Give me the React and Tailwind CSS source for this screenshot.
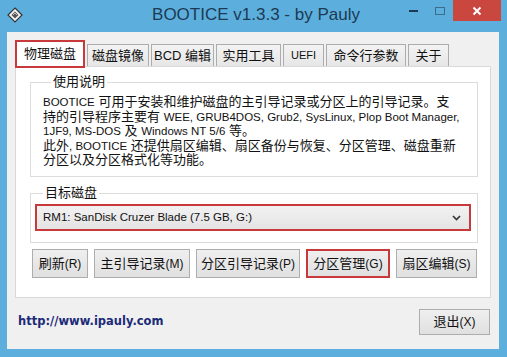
import React from 'react'

const tabs = [
  { label: "物理磁盘", w: "w-[70px]", active: true },
  { label: "磁盘镜像", w: "w-[62px]" },
  { label: "BCD 编辑", w: "w-[63px]" },
  { label: "实用工具", w: "w-[65px]" },
  { label: "UEFI", w: "w-[41px]", small: true },
  { label: "命令行参数", w: "w-[80px]" },
  { label: "关于", w: "w-[41px]" },
];

const buttons = [
  { label: "刷新", key: "(R)", w: "w-[56px]" },
  { label: "主引导记录", key: "(M)", w: "w-[96px]" },
  { label: "分区引导记录", key: "(P)", w: "w-[104px]" },
  { label: "分区管理", key: "(G)", w: "w-[84px]", marked: true },
  { label: "扇区编辑", key: "(S)", w: "w-[81px]" },
];

const font = "font-['Liberation_Sans','Noto_Sans_CJK_SC',sans-serif]";

// latin runs are a bit smaller than the CJK text
const L = ({ children }) => <span className="text-[11.5px]">{children}</span>;

const AppIcon = () => (
  <svg width="16" height="16" viewBox="0 0 16 16">
    <path d="M8 1 L15 8 L8 15 L1 8 Z" fill="#f4f4f4" stroke="#333" strokeWidth="1.2" />
    <path d="M4.5 8 L8 4.5 L11.5 8 L8 11.5 Z" fill="#555" />
    <path d="M6 8 L8 6 L10 8" fill="none" stroke="#ddd" strokeWidth="0.8" />
  </svg>
);

const App = () => {
  return (
    <div lang="zh-CN" className={`w-[507px] h-[357px] bg-[#5cafdc] flex flex-col ${font} overflow-hidden`}>
      {/* title bar */}
      <div className="h-[32px] flex items-start relative">
        <div className="pl-[7px] pt-[7px]">
          <AppIcon />
        </div>
        <div className="flex-1 text-center text-[17px] leading-[30px] text-[#1d3a55] pl-[90px]">
          BOOTICE v1.3.3 - by Pauly
        </div>
        <div className="flex items-start">
          <div className="w-[28px] h-[21px] flex items-center justify-center">
            <div className="w-[9px] h-[2px] bg-[#1d3a55]" />
          </div>
          <div className="w-[26px] h-[21px] flex items-center justify-center">
            <div className="w-[10px] h-[8px] border border-[#3d6b8c]" />
          </div>
          <div className="w-[48px] h-[21px] bg-[#c9473f] flex items-center justify-center mr-[6px]">
            <svg width="10" height="10" viewBox="0 0 10 10">
              <path d="M1.5 1.5 L8.5 8.5 M8.5 1.5 L1.5 8.5" stroke="#fff" strokeWidth="2" />
            </svg>
          </div>
        </div>
      </div>

      {/* client area */}
      <div className="ml-[7px] w-[492px] h-[317px] bg-[#f0f0f0] pl-[8px] pt-[8px] text-[13px] text-[#111]">
        <div className="flex items-end gap-[2px] h-[26px]">
          {tabs.map((t) =>
            t.active ? (
              <div
                key={t.label}
                className={`${t.w} h-[28px] -mb-[2px] relative z-10 bg-white border-2 border-[#c8393b] flex items-center justify-center`}
              >
                {t.label}
              </div>
            ) : (
              <div
                key={t.label}
                className={`${t.w} h-[22px] bg-gradient-to-b from-[#f3f3f3] to-[#e6e6e6] border border-[#acacac] border-b-0 flex items-center justify-center ${t.small ? "text-[11px]" : ""}`}
              >
                {t.label}
              </div>
            )
          )}
        </div>

        {/* tab panel */}
        <div className="w-[476px] h-[232px] bg-white border border-[#d9d9d9] pt-[7px] pl-[14px]">
          <fieldset className="w-[448px] h-[103px] border border-[#dcdcdc] pl-[12px]">
            <legend className="ml-[8px] px-[2px] leading-[16px]">使用说明</legend>
            <div className="pt-[5px] leading-[14.5px] text-[13px] whitespace-nowrap">
              <div><L>BOOTICE</L> 可用于安装和维护磁盘的主引导记录或分区上的引导记录。支</div>
              <div>持的引导程序主要有 <L>WEE, GRUB4DOS, Grub2, SysLinux, Plop Boot Manager,</L></div>
              <div><L>1JF9, MS-DOS</L> 及 <L>Windows NT 5/6</L> 等。</div>
              <div>此外<L>, BOOTICE</L> 还提供扇区编辑、扇区备份与恢复、分区管理、磁盘重新</div>
              <div>分区以及分区格式化等功能。</div>
            </div>
          </fieldset>

          <fieldset className="mt-[8px] w-[448px] h-[58px] border border-[#dcdcdc] pl-[4px]">
            <legend className="ml-[8px] px-[2px] leading-[16px]">目标磁盘</legend>
            <div className="mt-[3px] w-[436px] h-[27px] border-2 border-[#c8393b] bg-gradient-to-b from-[#f2f2f2] to-[#e4e4e4] flex items-center pl-[6px] pr-[8px]">
              <span className="flex-1 text-[11.5px]">RM1: SanDisk Cruzer Blade (7.5 GB, G:)</span>
              <svg width="9" height="6" viewBox="0 0 9 6">
                <path d="M1 1 L4.5 4.5 L8 1" fill="none" stroke="#333" strokeWidth="1.6" />
              </svg>
            </div>
          </fieldset>

          <div className="mt-[6px] ml-[2px] flex gap-[6px]">
            {buttons.map((b) => (
              <div
                key={b.label}
                className={`${b.w} h-[29px] flex items-center justify-center bg-gradient-to-b from-[#efefef] to-[#e0e0e0] ${
                  b.marked ? "border-2 border-[#c8393b]" : "border border-[#adadad]"
                }`}
              >
                {b.label}
                <span className="text-[12px]">{b.key}</span>
              </div>
            ))}
          </div>
        </div>

        {/* footer */}
        <div className="flex items-center h-[46px] pr-[9px]">
          <span className="ml-[3px] pt-[1px] font-['DejaVu_Sans',sans-serif] font-bold text-[11.5px] text-[#1c2a78]">
            http://www.ipauly.com
          </span>
          <div className="ml-auto mt-[1px] w-[71px] h-[26px] flex items-center justify-center bg-gradient-to-b from-[#efefef] to-[#e0e0e0] border border-[#adadad]">
            退出<span className="text-[12px]">(X)</span>
          </div>
        </div>
      </div>
    </div>
  );
};

export default App
